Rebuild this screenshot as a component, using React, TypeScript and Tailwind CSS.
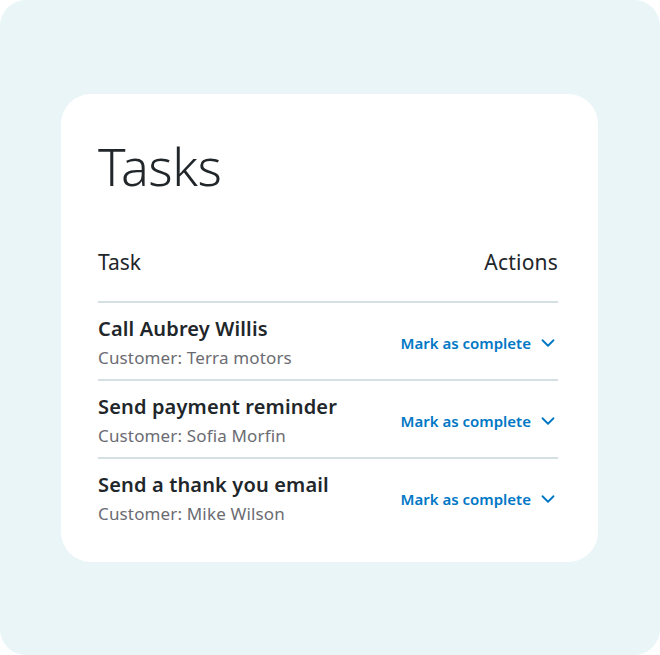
import { ChevronDown } from 'lucide-react';

const tasks = [
  { title: 'Call Aubrey Willis', customer: 'Terra motors' },
  { title: 'Send payment reminder', customer: 'Sofia Morfin' },
  { title: 'Send a thank you email', customer: 'Mike Wilson' },
];

export default function App() {
  return (
    <div className="w-[660px] h-[655px] bg-white">
      <div
        className="w-full h-full rounded-[26px] bg-[#e9f5f7] pt-[94px] pl-[61px] [font-variant-ligatures:none]"
        style={{ fontFamily: '"Noto Sans", Lato, sans-serif' }}
      >
        <div className="w-[537px] h-[468px] bg-white rounded-[30px] pl-[37px] pr-[40px] pt-[38px]">
          {/* Title */}
          <h1 className="text-[52px] leading-[68px] font-light text-[#21262a] tracking-[-0.5px]">
            Tasks
          </h1>

          {/* Table header */}
          <div className="flex justify-between items-end mt-[49px] pb-[26px] text-[21px] leading-[26px] text-[#21262a]">
            <span>Task</span>
            <span className="tracking-[0.2px]">Actions</span>
          </div>

          {/* Rows */}
          {tasks.map((t) => (
            <div
              key={t.title}
              className="flex items-start justify-between border-t-2 border-[#d5e0e4] h-[78px] pt-[13px]"
            >
              <div className="flex flex-col">
                <span className="text-[20px] leading-[26px] font-semibold text-[#21262a] tracking-[0.15px]">
                  {t.title}
                </span>
                <span className="text-[17px] leading-[24px] mt-[4px] text-[#6b6c72] tracking-[0.15px]">
                  Customer: {t.customer}
                </span>
              </div>
              <button className="flex items-center gap-[6px] text-[15px] leading-[22px] font-semibold text-[#0077c5] mt-[16px] -mr-[1px]">
                Mark as complete
                <ChevronDown className="w-[22px] h-[22px]" strokeWidth={2} />
              </button>
            </div>
          ))}
        </div>
      </div>
    </div>
  );
}
